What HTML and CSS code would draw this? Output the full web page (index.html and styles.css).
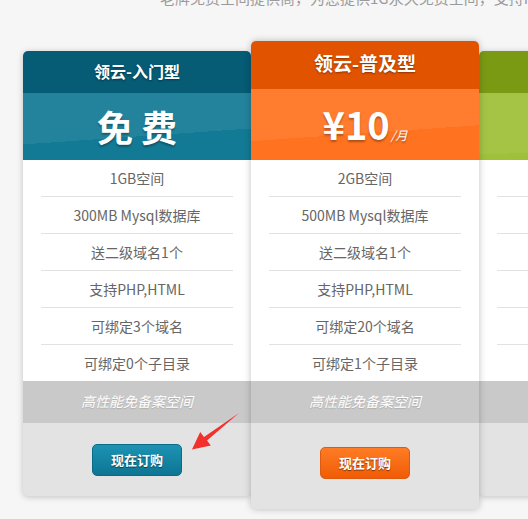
FILE: index.html
```html
<!DOCTYPE html>
<html lang="zh-CN">
<head>
    <meta charset="UTF-8">
    <meta name="viewport" content="width=device-width, initial-scale=1.0">
    <title>领云空间</title>
    <link rel="stylesheet" href="styles.css">
</head>
<body>
    <p class="intro">老牌免费空间提供商，为您提供1G永久免费空间，支持PHP,HTML</p>

    <div class="plans">
        <div class="plan blue">
            <div class="plan-head">领云-入门型</div>
            <div class="plan-price">免费</div>
            <ul class="plan-list">
                <li>1GB空间</li>
                <li>300MB Mysql数据库</li>
                <li>送二级域名1个</li>
                <li>支持PHP,HTML</li>
                <li>可绑定3个域名</li>
                <li>可绑定0个子目录</li>
            </ul>
            <div class="plan-tag">高性能免备案空间</div>
            <div class="plan-foot"><a class="buy" href="#">现在订购</a></div>
        </div>

        <div class="plan orange featured">
            <div class="plan-head">领云-普及型</div>
            <div class="plan-price">¥10<small>/月</small></div>
            <ul class="plan-list">
                <li>2GB空间</li>
                <li>500MB Mysql数据库</li>
                <li>送二级域名1个</li>
                <li>支持PHP,HTML</li>
                <li>可绑定20个域名</li>
                <li>可绑定1个子目录</li>
            </ul>
            <div class="plan-tag">高性能免备案空间</div>
            <div class="plan-foot"><a class="buy" href="#">现在订购</a></div>
        </div>

        <div class="plan green">
            <div class="plan-head"></div>
            <div class="plan-price"></div>
            <ul class="plan-list">
                <li></li>
                <li></li>
                <li></li>
                <li></li>
                <li></li>
                <li></li>
            </ul>
            <div class="plan-tag"></div>
            <div class="plan-foot"></div>
        </div>

        <svg class="arrow" width="60" height="50" viewBox="0 0 60 50">
            <path d="M53 7 L21 34.5 L24.8 39.6 L6 43.5 L14.2 26 L18 31 Z" fill="#f2302c"/>
        </svg>
    </div>
</body>
</html>
```

FILE: styles.css
```css
* {
    margin: 0;
    padding: 0;
    box-sizing: border-box;
}

body {
    background-color: #f6f6f6;
    font-family: "Noto Sans CJK SC", "Microsoft YaHei", sans-serif;
    overflow: hidden;
    width: 528px;
    height: 519px;
}

.intro {
    margin-top: -12px;
    padding-left: 160px;
    font-size: 15px;
    line-height: 20px;
    color: #9a9a9a;
    white-space: nowrap;
    overflow: hidden;
}

.plans {
    position: relative;
    display: flex;
    align-items: flex-start;
    padding-left: 23px;
    margin-top: 43px;
}

.plan {
    flex: 0 0 228px;
    width: 228px;
    background: #e3e3e3;
    border-radius: 5px;
    overflow: hidden;
    box-shadow: 0 1px 6px rgba(0,0,0,0.22);
    position: relative;
    text-align: center;
}

.plan-head {
    height: 42px;
    line-height: 40px;
    color: #fff;
    font-size: 16px;
    font-weight: bold;
    text-shadow: 0 1px 2px rgba(0,0,0,0.4);
}

.plan-price {
    height: 67px;
    line-height: 67px;
    color: #fff;
    font-size: 36px;
    font-weight: bold;
    letter-spacing: 8px;
    text-indent: 8px;
    text-shadow: 0 2px 2px rgba(0,0,0,0.3);
}

.plan-price small {
    font-size: 12px;
    font-weight: normal;
    font-style: italic;
    letter-spacing: 0;
    margin-left: -6px;
}

.plan-list {
    list-style: none;
    background: #fff;
    padding: 0 18px;
}

.plan-list li {
    height: 37px;
    line-height: 36px;
    border-top: 1px solid #e2e2e2;
    font-size: 14px;
    color: #666;
}

.plan-list li:first-child {
    height: 36px;
    border-top: none;
}

.plan-tag {
    height: 42px;
    line-height: 40px;
    background: #c9c9c9;
    color: #fff;
    font-size: 14px;
    font-style: italic;
    text-shadow: 0 1px 1px rgba(0,0,0,0.15);
}

.plan-foot {
    height: 73px;
    padding-top: 21px;
}

.buy {
    display: inline-block;
    width: 90px;
    height: 32px;
    line-height: 30px;
    border-radius: 5px;
    color: #fff;
    font-size: 13px;
    font-weight: bold;
    text-decoration: none;
    text-shadow: 0 1px 1px rgba(0,0,0,0.5);
}

/* colours */
.blue .plan-head { background: #065b75; }
.blue .plan-price {
    background: linear-gradient(176deg, rgba(255,255,255,0.07) 62%, transparent 62%), #137a95;
}
.blue .buy {
    background: linear-gradient(#1c93b3, #0d7593);
    border: 1px solid #0c6a86;
}

.orange .plan-head { background: #e25300; }
.orange .plan-price {
    background: linear-gradient(176deg, rgba(255,255,255,0.07) 60%, transparent 60%), #ff7220;
}
.orange .buy {
    background: linear-gradient(#ff7c25, #f05c05);
    border: 1px solid #de5a10;
}

.green .plan-head { background: #7b9a14; }
.green .plan-price {
    background: linear-gradient(178deg, rgba(255,255,255,0.06) 82%, transparent 82%), #9fc03a;
}

.featured {
    margin-top: -10px;
    z-index: 2;
    box-shadow: 0 0 7px rgba(0,0,0,0.25);
}

.featured .plan-head {
    height: 48px;
    line-height: 43px;
    font-size: 19px;
}

.featured .plan-price {
    height: 71px;
    line-height: 70px;
    letter-spacing: 0;
    text-indent: 0;
    font-size: 38px;
}

.featured .plan-price small {
    margin-left: 1px;
}

.featured .plan-foot {
    height: 86px;
    padding-top: 24px;
}

.arrow {
    position: absolute;
    left: 186px;
    top: 355px;
    z-index: 3;
}
```
